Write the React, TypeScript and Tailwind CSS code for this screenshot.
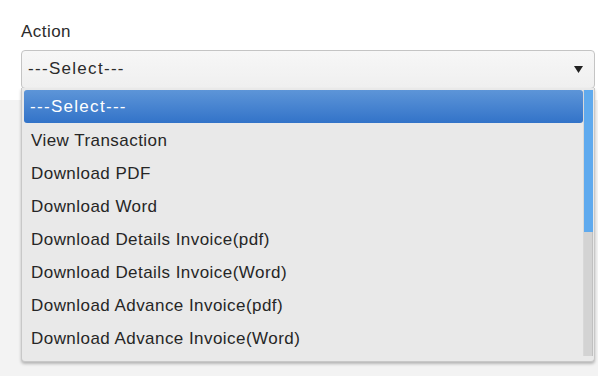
import React from "react";

const options = [
  "View Transaction",
  "Download PDF",
  "Download Word",
  "Download Details Invoice(pdf)",
  "Download Details Invoice(Word)",
  "Download Advance Invoice(pdf)",
  "Download Advance Invoice(Word)",
];

export default function App() {
  return (
    <div
      className="relative w-[598px] h-[376px] overflow-hidden bg-[#f3f3f3] text-[#2b2b2b] tracking-[0.45px]"
      style={{ fontFamily: '"Liberation Sans", Arial, sans-serif' }}
    >
      <div className="bg-white h-[100px] px-[21px] pt-[22px]">
        <div className="text-[17px] leading-[20px] text-[#2b2b2b]">Action</div>
        <div className="mt-[8px] h-[39px] w-[574px] rounded-[4px] border border-[#c4c4c4] bg-gradient-to-b from-[#f7f7f7] to-[#efefef] flex items-center pl-[6px] pr-[11px] justify-between">
          <span className="text-[17px] text-[#2b2b2b] tracking-[1.3px] -mt-[1px]">---Select---</span>
          <svg width="9" height="7" viewBox="0 0 9 7">
            <path d="M0 0 H9 L4.5 7 Z" fill="#222" />
          </svg>
        </div>
      </div>

      <div className="absolute left-[21px] top-[88px] w-[574px] h-[274px] rounded-b-[4px] border-l border-r border-b border-[#c8c8c8] bg-[#e9e9e9] shadow-[0_2px_3px_rgba(0,0,0,0.25)] flex pt-[2px] pl-[2px]">
        <div className="flex-1 flex flex-col">
          <div className="h-[33px] rounded-[3px] bg-gradient-to-b from-[#5d95d8] to-[#3273c8] text-white text-[17px] tracking-[1.3px] flex items-center pl-[6px] pt-[1px]">
            ---Select---
          </div>
          {options.map((o) => (
            <div key={o} className="h-[33px] text-[17px] text-[#262626] flex items-center pl-[7px] pt-[2px]">
              {o}
            </div>
          ))}
        </div>
        <div className="w-[10px] mr-[1px] flex flex-col h-[266px] border-l border-[#d8d8d8]">
          <div className="h-[142px] bg-[#5faaee]" />
          <div className="flex-1 bg-[#d3d3d3] border-r border-[#c0c0c0]" />
        </div>
      </div>
    </div>
  );
}
